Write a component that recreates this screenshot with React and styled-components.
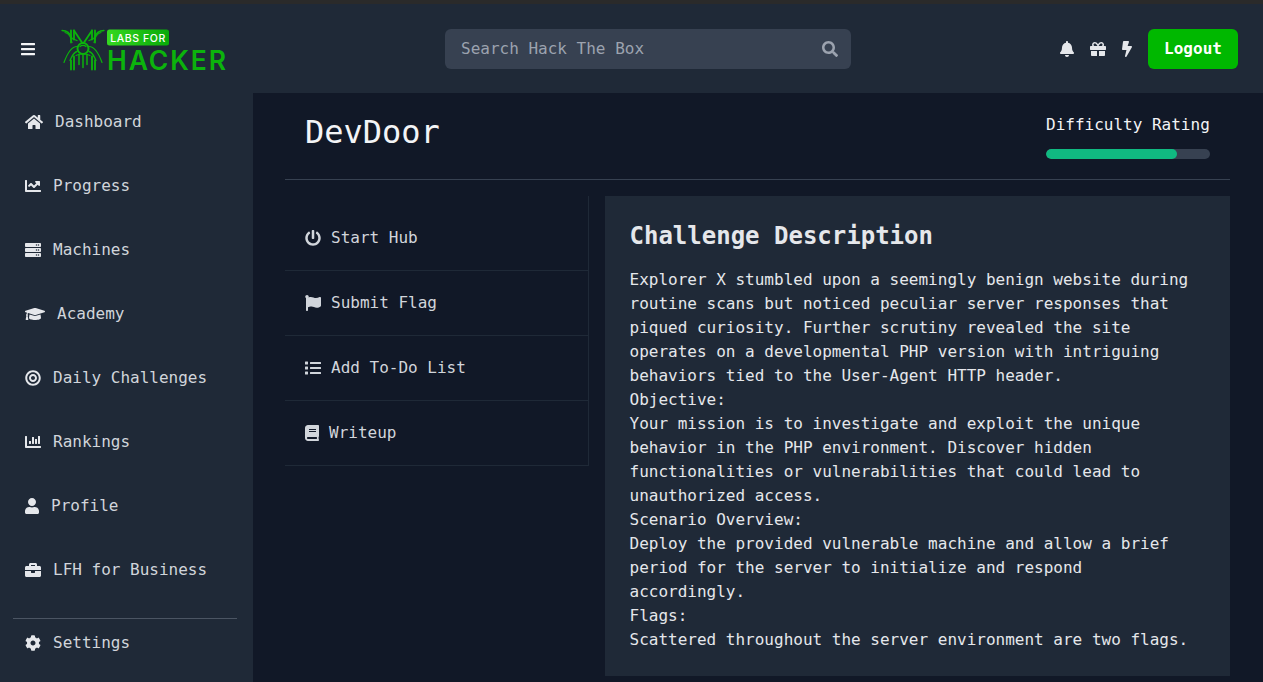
import React from "react";
import styled, { createGlobalStyle } from "styled-components";
import {
  FaBars, FaSearch, FaBell, FaGift, FaBolt, FaHome, FaChartLine, FaServer, FaGraduationCap,
  FaBullseye, FaChartBar, FaUser, FaBriefcase, FaCog, FaPowerOff, FaFlag, FaList, FaBook,
} from "react-icons/fa";

const Global = createGlobalStyle`
  html, body { margin: 0; height: 100%; overflow: hidden; background: #111827; }
  * { box-sizing: border-box; }
  body { font-family: "DejaVu Sans Mono", "Liberation Mono", monospace; font-size: 16px; line-height: 24px; color: #e5e7eb; }
`;

const Page = styled.div`
  display: flex;
  flex-direction: column;
  width: 1263px;
  height: 682px;
  overflow: hidden;
`;
const WindowEdge = styled.div`
  height: 4px;
  flex: none;
  background: #2a2a2a;
`;
const Header = styled.header`
  flex: none;
  height: 89px;
  display: flex;
  align-items: center;
  justify-content: space-between;
  padding: 0 25px 0 21px;
  background: #1f2937;
`;
const Brand = styled.div`
  display: flex;
  align-items: center;
  gap: 26px;
  width: 215px;
  svg.bars { height: 16px; width: 14px; color: #f3f4f6; flex: none; }
`;
const SearchBox = styled.div`
  width: 406px;
  height: 40px;
  display: flex;
  align-items: center;
  justify-content: space-between;
  padding: 0 13px 0 16px;
  border-radius: 6px;
  background: #374151;
  color: #9ca3af;
  svg { height: 16px; width: 16px; }
`;
const Actions = styled.div`
  display: flex;
  align-items: center;
  gap: 16px;
`;
const ActionIcon = styled.span`
  display: flex;
  svg { height: 16px; width: ${(p) => p.$w}px; color: #e5e7eb; }
`;
const LogoutButton = styled.button`
  width: 90px;
  height: 40px;
  border: 0;
  border-radius: 6px;
  background: #00b800;
  color: #fff;
  font: bold 16px "DejaVu Sans Mono", monospace;
`;
const Body = styled.div`
  flex: 1;
  display: flex;
  min-height: 0;
`;
const Sidebar = styled.nav`
  width: 253px;
  flex: none;
  padding: 9px 16px 0 13px;
  background: #1f2937;
  display: flex;
  flex-direction: column;
`;
const NavList = styled.div`
  display: flex;
  flex-direction: column;
  gap: 24px;
`;
const NavItem = styled.div`
  display: flex;
  align-items: center;
  height: 40px;
  padding-left: 12px;
  color: #d1d5db;
  svg { height: 16px; width: ${(p) => p.$w}px; margin-right: 12px; color: #e5e7eb; flex: none; }
`;
const NavDivider = styled.hr`
  width: 224px;
  height: 1px;
  border: 0;
  margin: 28px 0 4px;
  background: #4b5563;
`;
const Main = styled.main`
  flex: 1;
  min-width: 0;
  padding: 0 33px 0 32px;
  background: #111827;
`;
const ChallengeHeader = styled.div`
  display: flex;
  justify-content: space-between;
  align-items: flex-start;
  height: 87px;
  padding: 19px 20px 0;
  border-bottom: 1px solid #374151;
`;
const Title = styled.h1`
  margin: 0;
  font-size: 32px;
  line-height: 40px;
  font-weight: 400;
  color: #f3f4f6;
`;
const Difficulty = styled.div`
  width: 164px;
  margin-top: 1px;
  color: #f3f4f6;
`;
const Track = styled.div`
  height: 10px;
  margin-top: 12px;
  border-radius: 5px;
  background: #374151;
  overflow: hidden;
`;
const Fill = styled.div`
  height: 100%;
  border-radius: 5px;
  background: #10b981;
`;
const Columns = styled.div`
  display: flex;
  gap: 16px;
  margin-top: 16px;
`;
const ActionList = styled.div`
  width: 304px;
  flex: none;
  align-self: flex-start;
  padding-top: 10px;
  border-right: 1px solid #1f2937;
`;
const ActionRow = styled.div`
  display: flex;
  align-items: center;
  height: 65px;
  padding: 0 20px 1px;
  border-bottom: 1px solid #1f2937;
  color: #d1d5db;
  svg { height: 16px; width: ${(p) => p.$w}px; margin-right: 10px; flex: none; }
`;
const Panel = styled.section`
  width: 625px;
  height: 480px;
  padding: 24px 23.5px 24px 24.5px;
  background: #1f2937;
  color: #e5e7eb;
`;
const PanelTitle = styled.h2`
  margin: 0 0 16px;
  font-size: 24px;
  line-height: 32px;
  font-weight: 700;
  color: #e5e7eb;
`;
const Para = styled.p`
  margin: 0;
`;

const Logo = () => (
  <svg width="176" height="56" viewBox="0 -7.5 176 56" role="img" aria-label="Labs for Hacker" style={{ flex: "none" }}>
    <defs>
      <linearGradient id="badge" x1="0" y1="0" x2="1" y2="0">
        <stop offset="0" stopColor="#35d821" />
        <stop offset="1" stopColor="#08a908" />
      </linearGradient>
    </defs>
    <g fill="none" stroke="#0cb30c" strokeLinecap="round">
      <path d="M1 2 C6 2 9 4 11 10 L16 12" strokeWidth="1.3" />
      <path d="M43 2 C38 2 35 4 33 10 L28 12" strokeWidth="1.3" />
      <path d="M4 4 C8 5 10 8 11 14" strokeWidth="1.1" />
      <path d="M40 4 C36 5 34 8 33 14" strokeWidth="1.1" />
      <path d="M10 2 L10 14 M13 2 L13 11 M31 2 L31 11 M34 2 L34 14" strokeWidth="1.8" />
      <path d="M13 2 L21 14 M31 2 L23 14" strokeWidth="1.8" />
      <circle cx="22" cy="20" r="5.5" strokeWidth="2" />
      <path d="M19 18 C20.5 16.5 23.5 16.5 25 18" strokeWidth="1.2" />
      <path d="M16 18 C11 18 7 23 3 34 M28 18 C33 18 37 23 41 34" strokeWidth="1.2" />
      <path d="M16 23 C12 24 11 28 9 32 M28 23 C32 24 33 28 35 32" strokeWidth="1.3" />
      <path d="M10 32 L10 41 M13 28 L13 41 M31 28 L31 41 M34 32 L34 41" strokeWidth="1.8" />
      <path d="M18 26 L18 36 M26 26 L26 36 M22 26 L22 39" strokeWidth="1.5" />
      <path d="M15 27 C18 25 26 25 29 27" strokeWidth="1.1" />
    </g>
    <rect x="46" y="1" width="62" height="16" rx="2.5" fill="url(#badge)" />
    <text x="77" y="13" textAnchor="middle" fill="#fff" letterSpacing="0.6"
      fontFamily="Inter, 'Liberation Sans', sans-serif" fontSize="10.5" fontWeight="500">LABS FOR</text>
    <text x="46" y="41" fill="#0cb30c" letterSpacing="1.9"
      fontFamily="Inter, 'Liberation Sans', sans-serif" fontSize="26.5" fontWeight="600">HACKER</text>
  </svg>
);

const nav = [
  [FaHome, "Dashboard", 18], [FaChartLine, "Progress", 16], [FaServer, "Machines", 16], [FaGraduationCap, "Academy", 20],
  [FaBullseye, "Daily Challenges", 16], [FaChartBar, "Rankings", 16], [FaUser, "Profile", 14], [FaBriefcase, "LFH for Business", 16],
];
const actions = [
  [FaPowerOff, "Start Hub", 16], [FaFlag, "Submit Flag", 16], [FaList, "Add To-Do List", 16], [FaBook, "Writeup", 14],
];
const paragraphs = [
  "Explorer X stumbled upon a seemingly benign website during routine scans but noticed peculiar server responses that piqued curiosity. Further scrutiny revealed the site operates on a developmental PHP version with intriguing behaviors tied to the User-Agent HTTP header.",
  "Objective:",
  "Your mission is to investigate and exploit the unique behavior in the PHP environment. Discover hidden functionalities or vulnerabilities that could lead to unauthorized access.",
  "Scenario Overview:",
  "Deploy the provided vulnerable machine and allow a brief period for the server to initialize and respond accordingly.",
  "Flags:",
  "Scattered throughout the server environment are two flags.",
];

export default function App() {
  return (
    <Page>
      <Global />
      <WindowEdge />
      <Header>
        <Brand>
          <FaBars className="bars" />
          <Logo />
        </Brand>
        <SearchBox>
          <span>Search Hack The Box</span>
          <FaSearch />
        </SearchBox>
        <Actions>
          <ActionIcon $w={14}><FaBell /></ActionIcon>
          <ActionIcon $w={16}><FaGift /></ActionIcon>
          <ActionIcon $w={10}><FaBolt /></ActionIcon>
          <LogoutButton>Logout</LogoutButton>
        </Actions>
      </Header>
      <Body>
        <Sidebar>
          <NavList>
            {nav.map(([Icon, label, w]) => (
              <NavItem key={label} $w={w}><Icon />{label}</NavItem>
            ))}
          </NavList>
          <NavDivider />
          <NavItem $w={16}><FaCog />Settings</NavItem>
        </Sidebar>
        <Main>
          <ChallengeHeader>
            <Title>DevDoor</Title>
            <Difficulty>
              Difficulty Rating
              <Track><Fill style={{ width: "80%" }} /></Track>
            </Difficulty>
          </ChallengeHeader>
          <Columns>
            <ActionList>
              {actions.map(([Icon, label, w]) => (
                <ActionRow key={label} $w={w}><Icon />{label}</ActionRow>
              ))}
            </ActionList>
            <Panel>
              <PanelTitle>Challenge Description</PanelTitle>
              {paragraphs.map((p) => <Para key={p}>{p}</Para>)}
            </Panel>
          </Columns>
        </Main>
      </Body>
    </Page>
  );
}
